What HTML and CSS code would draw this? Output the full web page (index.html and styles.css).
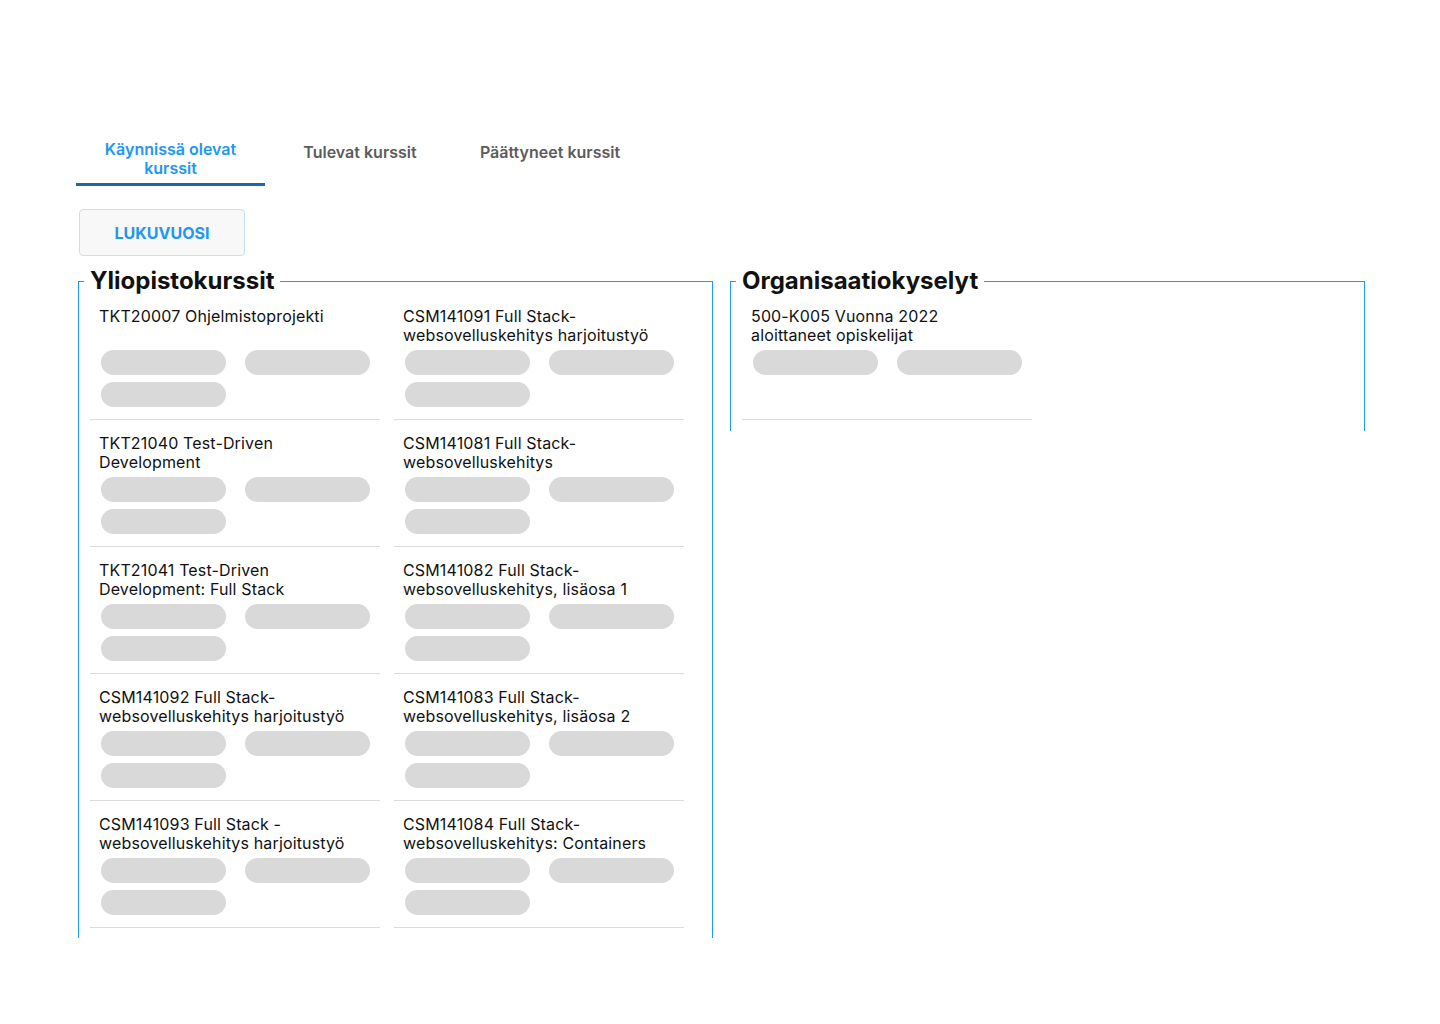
FILE: index.html
```html
<!DOCTYPE html>
<html lang="fi">
<head>
<meta charset="utf-8">
<title>Kurssit</title>
<link rel="stylesheet" href="styles.css">
</head>
<body>
<div class="page">
  <nav class="tabs">
    <div class="tab tab-active">Käynnissä olevat<br>kurssit</div>
    <div class="tab">Tulevat kurssit</div>
    <div class="tab">Päättyneet kurssit</div>
  </nav>
  <button class="year-btn">LUKUVUOSI</button>
  <div class="boxes">
    <fieldset class="box">
      <legend>Yliopistokurssit</legend>
      <div class="grid">
        <div class="card"><div class="title">TKT20007 Ohjelmistoprojekti</div><div class="pills"><span></span><span></span><span></span></div></div>
        <div class="card"><div class="title">CSM141091 Full Stack-websovelluskehitys harjoitustyö</div><div class="pills"><span></span><span></span><span></span></div></div>
        <div class="card"><div class="title">TKT21040 Test-Driven Development</div><div class="pills"><span></span><span></span><span></span></div></div>
        <div class="card"><div class="title">CSM141081 Full Stack-websovelluskehitys</div><div class="pills"><span></span><span></span><span></span></div></div>
        <div class="card"><div class="title">TKT21041 Test-Driven Development: Full Stack</div><div class="pills"><span></span><span></span><span></span></div></div>
        <div class="card"><div class="title">CSM141082 Full Stack-websovelluskehitys, lisäosa 1</div><div class="pills"><span></span><span></span><span></span></div></div>
        <div class="card"><div class="title">CSM141092 Full Stack-websovelluskehitys harjoitustyö</div><div class="pills"><span></span><span></span><span></span></div></div>
        <div class="card"><div class="title">CSM141083 Full Stack-websovelluskehitys, lisäosa 2</div><div class="pills"><span></span><span></span><span></span></div></div>
        <div class="card"><div class="title">CSM141093 Full Stack -websovelluskehitys harjoitustyö</div><div class="pills"><span></span><span></span><span></span></div></div>
        <div class="card"><div class="title">CSM141084 Full Stack-websovelluskehitys: Containers</div><div class="pills"><span></span><span></span><span></span></div></div>
      </div>
    </fieldset>
    <fieldset class="box box-short">
      <legend>Organisaatiokyselyt</legend>
      <div class="grid">
        <div class="card"><div class="title">500-K005 Vuonna 2022 aloittaneet opiskelijat</div><div class="pills"><span></span><span></span></div></div>
      </div>
    </fieldset>
  </div>
</div>
</body>
</html>
```
FILE: styles.css
```css
* { box-sizing: border-box; }
html, body { margin: 0; padding: 0; background: #fff; }
body { font-family: Inter, "Noto Sans", sans-serif; color: #111; }

.page { padding: 124px 0 0 76px; }

.tabs { display: flex; align-items: flex-start; }
.tab {
  width: 190px;
  text-align: center;
  font-size: 16px;
  font-weight: 600;
  line-height: 19px;
  color: #5c5c5c;
  padding-top: 18.5px;
}
.tab-active {
  width: 189px;
  color: #2196f3;
  padding-top: 15.5px;
  padding-bottom: 5.5px;
  border-bottom: 3px solid #1a69a8;
}

.year-btn {
  display: block;
  margin: 23px 0 0 3px;
  width: 166px;
  height: 47px;
  background: #f8f8f8;
  border: 1px solid #c5e0f7;
  border-radius: 4px;
  font-family: Inter, "Noto Sans", sans-serif;
  font-size: 16px;
  font-weight: 700;
  color: #2196f3;
}

.boxes {
  display: flex;
  gap: 17px;
  margin-top: 13px;
  margin-left: 2px;
  align-items: flex-start;
}
.box {
  margin: 0;
  width: 635px;
  border: 1px solid #2196f3;
  border-bottom: none;
  padding: 0 26px 10px 11px;
  min-width: 0;
}
.box-short { padding-bottom: 11px; }
.box legend {
  font-size: 24px;
  font-weight: 700;
  line-height: 24px;
  color: #111;
  padding: 0 6px;
  margin-left: -6px;
}

.grid {
  display: grid;
  grid-template-columns: 290px 290px;
  column-gap: 14px;
}
.card {
  border-bottom: 1px solid #dcdcdc;
  padding: 14px 9px 12px 9px;
}
.title {
  font-size: 16px;
  line-height: 19px;
  letter-spacing: 0.15px;
  height: 38px;
  padding-right: 4px;
  color: #111;
}
.pills {
  margin-top: 5px;
  padding-left: 2px;
  display: grid;
  grid-template-columns: 125px 125px;
  column-gap: 19px;
  row-gap: 7px;
  min-height: 57px;
  align-content: start;
}
.pills span {
  display: block;
  height: 25px;
  border-radius: 13px;
  background: #d9d9d9;
}
```
